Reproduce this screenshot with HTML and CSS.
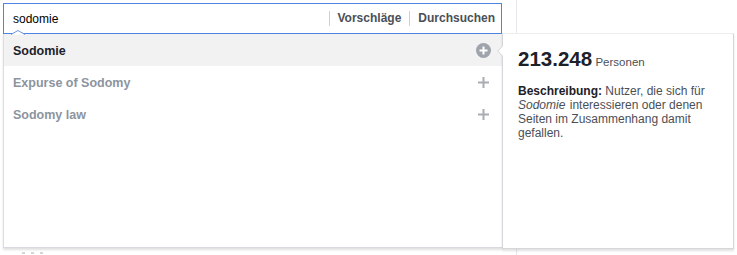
FILE: index.html
```html
<!DOCTYPE html>
<html>
<head>
    <meta charset="UTF-8">
    <title>Suche</title>
    <link rel="stylesheet" href="styles.css">
</head>
<body>
<div id="page">
    <div id="main">
        <div id="footer-bits"><span></span><span></span><span></span></div>
    </div>
    <div id="side"></div>
</div>

<div id="typeahead">
    <div id="search">
        <div id="query">sodomie</div>
        <a class="search-btn" href="#">Vorschläge</a>
        <a class="search-btn" href="#">Durchsuchen</a>
    </div>
    <div id="dropdown">
        <svg id="up-arrow" width="14" height="5" viewBox="0 0 14 5">
            <path d="M0 4.5 L7 0.5 L14 4.5" fill="#fff" stroke="#6a95e6" stroke-width="1"/>
        </svg>
        <ul id="results">
            <li class="result selected">
                <span>Sodomie</span>
                <svg class="add add-circle" width="15" height="15" viewBox="0 0 15 15">
                    <circle cx="7.5" cy="7.5" r="7.5" fill="#9fa3ab"/>
                    <path d="M7.5 3.5 V11.5 M3.5 7.5 H11.5" stroke="#fff" stroke-width="2"/>
                </svg>
            </li>
            <li class="result">
                <span>Expurse of Sodomy</span>
                <svg class="add" width="15" height="15" viewBox="0 0 15 15">
                    <path d="M7.5 2 V13 M2 7.5 H13" stroke="#a9acb3" stroke-width="2"/>
                </svg>
            </li>
            <li class="result">
                <span>Sodomy law</span>
                <svg class="add" width="15" height="15" viewBox="0 0 15 15">
                    <path d="M7.5 2 V13 M2 7.5 H13" stroke="#a9acb3" stroke-width="2"/>
                </svg>
            </li>
        </ul>
        <div id="info">
            <svg id="left-arrow" width="6" height="12" viewBox="0 0 6 12">
                <path d="M6 0.5 L0.8 6 L6 11.5" fill="#fff" stroke="#d4d6da" stroke-width="1"/>
            </svg>
            <div id="count"><b>213.248</b> <span>Personen</span></div>
            <div id="desc">
                <b>Beschreibung:</b> Nutzer, die sich für <i>Sodomie</i> interessieren oder denen Seiten im Zusammenhang damit gefallen.
            </div>
        </div>
    </div>
</div>
</body>
</html>
```

FILE: styles.css
```css
body {
    margin: 0px;
    background-color: #ffffff;
    font-family: 'Liberation Sans', Arial, sans-serif;
    font-size: 12px;
    color: #1d2129;
}
#page {
    display: flex;
    height: 255px;
}
#main {
    width: 516px;
    display: flex;
    align-items: flex-end;
}
#footer-bits {
    display: flex;
    gap: 6px;
    padding: 0px 0px 1px 22px;
}
#footer-bits span {
    width: 3px;
    height: 2px;
    background-color: #d3d5d9;
}
#side {
    flex: 1;
    border-left: 1px solid #e5e7ea;
}
/* the typeahead lies over the page */
#typeahead {
    position: absolute;
    top: 3px;
    left: 3px;
    width: 731px;
}
#search {
    width: 499px;
    height: 31px;
    box-sizing: border-box;
    border: 1px solid #4f83e3;
    background-color: #ffffff;
    display: flex;
    align-items: center;
}
#query {
    flex: 1;
    padding-left: 9px;
    color: #000000;
}
.search-btn {
    border-left: 1px solid #c8d0e0;
    padding: 0px 8px 0px 8px;
    line-height: 15px;
    font-weight: bold;
    color: #4b4f56;
    text-decoration: none;
}
.search-btn:last-child {
    padding-right: 6px;
}
#dropdown {
    display: flex;
    position: relative;
}
#up-arrow {
    position: absolute;
    top: -4px;
    left: 8px;
}
#results {
    list-style: none;
    margin: 0px;
    padding: 0px;
    width: 499px;
    height: 214px;
    box-sizing: border-box;
    border-left: 1px solid #dcdee3;
    background-color: #ffffff;
    box-shadow: 0 2px 2px rgba(0, 0, 0, 0.12);
    border-bottom: 1px solid #d8dadf;
}
.result {
    height: 32px;
    display: flex;
    align-items: center;
    justify-content: space-between;
    padding: 0px 11px 0px 9px;
    font-size: 12.5px;
    font-weight: bold;
    color: #8d949e;
}
.result span {
    margin-top: 2px;
}
.result.selected {
    background-color: #f2f2f2;
    color: #1d2129;
}
.add-circle {
    margin-top: 1px;
}
#info {
    position: relative;
    width: 232px;
    height: 216px;
    margin-top: -1px;
    box-sizing: border-box;
    border-left: 1px solid #d4d6da;
    border-right: 1px solid #d4d6da;
    border-top: 1px solid #eceef0;
    border-bottom: 1px solid #d4d6da;
    padding: 13px 14px 0px 15px;
    background-color: #ffffff;
    box-shadow: 0 2px 2px rgba(0, 0, 0, 0.12);
}
#left-arrow {
    position: absolute;
    left: -6px;
    top: 11px;
}
#count {
    line-height: 24px;
    margin-bottom: 10px;
}
#count b {
    font-size: 20.5px;
    color: #1d2129;
}
#count span {
    font-size: 11.5px;
    color: #4b4f56;
}
#desc {
    line-height: 14px;
    color: #4b4f56;
}
#desc b {
    color: #1d2129;
}
#desc i {
    padding-right: 1px;
}
```
